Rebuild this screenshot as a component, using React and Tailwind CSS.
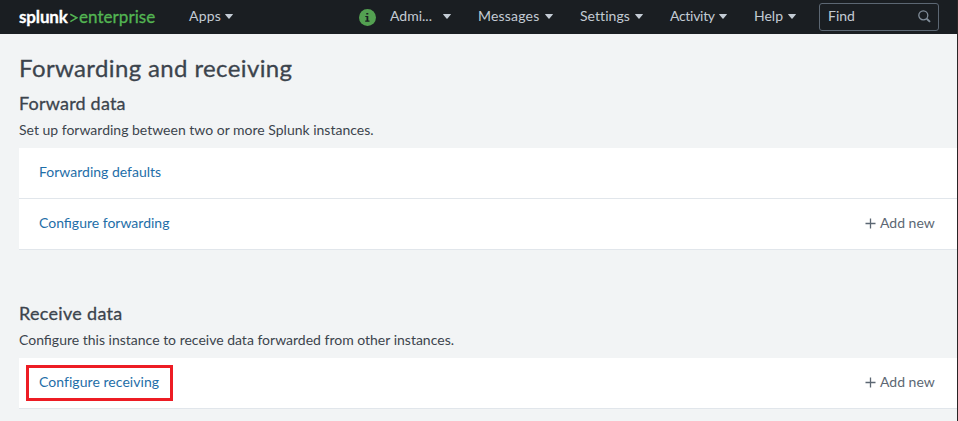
function Caret({ className = "" }) {
  return (
    <svg className={`mt-px shrink-0 ${className}`} width="8" height="5" viewBox="0 0 8 5" fill="#c3cbd4">
      <path d="M0.4 0h7.2a.3.3 0 0 1 .25.5L4.3 4.7a.4.4 0 0 1-.6 0L.15.5A.3.3 0 0 1 .4 0Z" />
    </svg>
  );
}

function NavItem({ label, className = "" }) {
  return (
    <button className={`flex shrink-0 items-center pb-[2px] whitespace-nowrap ${className}`}>
      <span>{label}</span>
      <Caret className="ml-auto" />
    </button>
  );
}

function AddNew() {
  return (
    <button className="ml-auto flex items-center text-[#5c6773]">
      <svg className="mr-1 shrink-0" width="11" height="11" viewBox="0 0 11 11" stroke="#5c6773" strokeWidth="1.3">
        <path d="M5.5 0.5v10M0.5 5.5h10" />
      </svg>
      <span className="w-[55px] text-left whitespace-nowrap">Add new</span>
    </button>
  );
}

function Entry({ label, className = "", addNew, highlighted }) {
  return (
    <div className="relative flex h-[51px] items-center border-b border-[#e1e6eb] bg-white pr-[22px] pb-[2px] pl-5">
      {highlighted && (
        <div className="absolute top-[7px] left-[7px] h-9 w-[147px] border-3 border-[#ed1c24]" />
      )}
      <a className={`whitespace-nowrap text-[#1e6ea8] ${className}`}>{label}</a>
      {addNew && <AddNew />}
    </div>
  );
}

export default function App() {
  return (
    <div className="flex h-[421px] w-[958px] overflow-hidden border-r border-[#2a2526] bg-[#f2f4f5] font-['Lato','Liberation_Sans',sans-serif] text-sm text-[#3c444d]">
      <div className="w-full">
        <header className="flex h-[34px] items-center bg-[#1a1e22] pl-[19px] text-[#c3cbd4]">
          <div className="flex w-[170px] shrink-0 items-center text-[17px] leading-[34px]">
            <span className="w-[51px] font-bold tracking-[-0.15px] text-white [-webkit-text-stroke:0.3px_white]">splunk</span>
            <svg className="mt-px mr-px shrink-0" width="8" height="10" viewBox="0 0 8 10" fill="none" stroke="#53b552" strokeWidth="1.5">
              <path d="M0.3 1.2 6.8 4.8 0.3 8.6" />
            </svg>
            <span className="tracking-[0.05px] text-[#53b552] [-webkit-text-stroke:0.3px_#53b552]">enterprise</span>
          </div>
          <NavItem label="Apps" className="w-[44px] tracking-[0.2px]" />
          <svg className="ml-[126px] shrink-0" width="17" height="17" viewBox="0 0 17 17">
            <circle cx="8.5" cy="8.5" r="8.5" fill="#53a051" />
            <path d="M7.3 3.9h2v1.7h-2zM6.3 7h3v4.6h1.2v1.1H6.2v-1.1h1.3V8.1H6.3z" fill="#1a1e22" />
          </svg>
          <NavItem label="Admi..." className="ml-[14px] w-[61px]" />
          <NavItem label="Messages" className="ml-[27px] w-[75px] tracking-[0.2px]" />
          <NavItem label="Settings" className="ml-[27px] w-[63px] tracking-[0.05px]" />
          <NavItem label="Activity" className="ml-[27px] w-[57px] tracking-[-0.3px]" />
          <NavItem label="Help" className="ml-[27px] w-[42px]" />
          <div className="ml-[23px] flex h-7 w-[120px] shrink-0 items-center rounded-[3px] border border-[#5c6773] pr-[7px] pb-[2px] pl-2">
            <span>Find</span>
            <svg className="ml-auto" width="13" height="13" viewBox="0 0 13 13" fill="none" stroke="#818d99">
              <circle cx="5.3" cy="5.3" r="4.5" strokeWidth="1.3" />
              <path d="M8.7 8.7 12 11.9" strokeWidth="1.9" />
            </svg>
          </div>
        </header>

        <main className="pl-[19px]">
          <h1 className="pt-[17px] text-2xl leading-[34px] tracking-[0.37px] [-webkit-text-stroke:0.3px_#3c444d]">
            Forwarding and receiving
          </h1>

          <section>
            <h2 className="pt-[6px] text-lg leading-6 tracking-[0.2px] [-webkit-text-stroke:0.3px_#3c444d]">Forward data</h2>
            <p className="h-[33px] pt-[5px] leading-5 whitespace-nowrap">
              Set up forwarding between two or more Splunk instances.
            </p>
            <Entry label="Forwarding defaults" />
            <Entry label="Configure forwarding" addNew />
          </section>

          <section className="pt-[45px]">
            <h2 className="pt-[6px] text-lg leading-6 tracking-[0.3px] [-webkit-text-stroke:0.3px_#3c444d]">Receive data</h2>
            <p className="h-[33px] pt-[5px] leading-5 whitespace-nowrap">
              Configure this instance to receive data forwarded from other instances.
            </p>
            <Entry label="Configure receiving" className="tracking-[0.05px]" addNew highlighted />
          </section>
        </main>
      </div>
    </div>
  );
}
